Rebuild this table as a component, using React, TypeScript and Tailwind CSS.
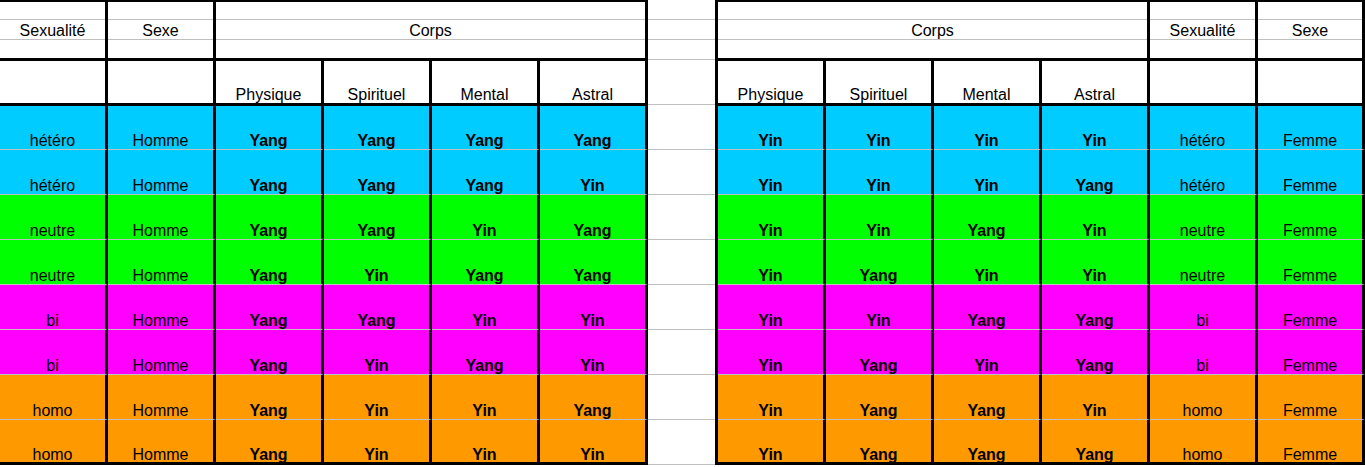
const rows = [
  { bg: 'bg-[#00ccff]', sex: 'hétéro', left: ['Yang', 'Yang', 'Yang', 'Yang'], right: ['Yin', 'Yin', 'Yin', 'Yin'] },
  { bg: 'bg-[#00ccff]', sex: 'hétéro', left: ['Yang', 'Yang', 'Yang', 'Yin'], right: ['Yin', 'Yin', 'Yin', 'Yang'] },
  { bg: 'bg-[#00ff00]', sex: 'neutre', left: ['Yang', 'Yang', 'Yin', 'Yang'], right: ['Yin', 'Yin', 'Yang', 'Yin'] },
  { bg: 'bg-[#00ff00]', sex: 'neutre', left: ['Yang', 'Yin', 'Yang', 'Yang'], right: ['Yin', 'Yang', 'Yin', 'Yin'] },
  { bg: 'bg-[#ff00ff]', sex: 'bi', left: ['Yang', 'Yang', 'Yin', 'Yin'], right: ['Yin', 'Yin', 'Yang', 'Yang'] },
  { bg: 'bg-[#ff00ff]', sex: 'bi', left: ['Yang', 'Yin', 'Yang', 'Yin'], right: ['Yin', 'Yang', 'Yin', 'Yang'] },
  { bg: 'bg-[#ff9900]', sex: 'homo', left: ['Yang', 'Yin', 'Yin', 'Yang'], right: ['Yin', 'Yang', 'Yang', 'Yin'] },
  { bg: 'bg-[#ff9900]', sex: 'homo', left: ['Yang', 'Yin', 'Yin', 'Yin'], right: ['Yin', 'Yang', 'Yang', 'Yang'] },
];

const corps = ['Physique', 'Spirituel', 'Mental', 'Astral'];
const last = rows.length - 1;

// row heights incl. the 1px gridline (last row has the thick bottom bar instead)
const rowH = (i: number) =>
  i === 0 ? 'h-[44px] border-b' : i === last ? 'h-[42px]' : 'h-[45px] border-b';

function Cell({ text, bold, w = 'w-[108px]', h, bg, sink }: { text: string; bold?: boolean; w?: string; h: string; bg: string; sink?: boolean }) {
  return (
    <div className={`${w} ${h} ${bg} border-[#c0c0c0] border-r-[3px] border-r-black flex items-end justify-center ${bold ? 'font-bold' : ''}`}>
      <span className={sink ? '-mb-[1px]' : ''}>{text}</span>
    </div>
  );
}

function HeadCol({ label, w = 'w-[108px]' }: { label: string; w?: string }) {
  return (
    <div className={`${w} border-r-[3px] border-black flex flex-col`}>
      <div className="h-[18px] border-b border-[#c0c0c0]" />
      <div className="h-[20px] border-b border-[#c0c0c0] flex items-end justify-center">{label}</div>
      <div className="h-[18px]" />
    </div>
  );
}

function LeftBlock() {
  return (
    <div className="w-[648px] shrink-0 flex flex-col">
      <div className="h-[2px] bg-black" />
      <div className="flex">
        <HeadCol label="Sexualité" />
        <HeadCol label="Sexe" />
        <HeadCol label="Corps" w="w-[432px]" />
      </div>
      <div className="h-[3px] bg-black" />
      <div className="flex">
        <Cell text="" h="h-[42px]" bg="bg-white" />
        <Cell text="" h="h-[42px]" bg="bg-white" />
        {corps.map(c => (
          <Cell key={c} text={c} h="h-[42px]" bg="bg-white" />
        ))}
      </div>
      <div className="relative h-[3px] bg-black" />
      {rows.map((r, i) => (
        <div key={i} className="flex">
          <Cell text={r.sex} h={rowH(i)} bg={r.bg} sink={i === last} />
          <Cell text="Homme" h={rowH(i)} bg={r.bg} sink={i === last} />
          {r.left.map((v, j) => (
            <Cell key={j} text={v} bold h={rowH(i)} bg={r.bg} sink={i === last} />
          ))}
        </div>
      ))}
      <div className="relative h-[3px] bg-black" />
    </div>
  );
}

function Gap() {
  const hs = ['h-[20px]', 'h-[20px]', 'h-[20px]', 'h-[45px]', ...Array(8).fill('h-[45px]')];
  return (
    <div className="w-[67px] shrink-0 flex flex-col">
      {hs.map((h, i) => (
        <div key={i} className={`${h} border-b border-[#c0c0c0]`} />
      ))}
    </div>
  );
}

function RightBlock() {
  return (
    <div className="w-[650px] shrink-0 flex flex-col border-l-[3px] border-black">
      <div className="h-[2px] bg-black" />
      <div className="flex">
        <HeadCol label="Corps" w="w-[432px]" />
        <HeadCol label="Sexualité" />
        <HeadCol label="Sexe" w="w-[107px]" />
      </div>
      <div className="h-[3px] bg-black" />
      <div className="flex">
        {corps.map(c => (
          <Cell key={c} text={c} h="h-[42px]" bg="bg-white" />
        ))}
        <Cell text="" h="h-[42px]" bg="bg-white" />
        <Cell text="" w="w-[107px]" h="h-[42px]" bg="bg-white" />
      </div>
      <div className="relative h-[3px] bg-black" />
      {rows.map((r, i) => (
        <div key={i} className="flex">
          {r.right.map((v, j) => (
            <Cell key={j} text={v} bold h={rowH(i)} bg={r.bg} sink={i === last} />
          ))}
          <Cell text={r.sex} h={rowH(i)} bg={r.bg} sink={i === last} />
          <Cell text="Femme" w="w-[107px]" h={rowH(i)} bg={r.bg} sink={i === last} />
        </div>
      ))}
      <div className="relative h-[3px] bg-black" />
    </div>
  );
}

export default function App() {
  return (
    <div className="w-[1365px] h-[467px] overflow-hidden bg-white text-black font-['Liberation_Sans',Arial,sans-serif] text-[16px] leading-[16px]">
      <div className="flex items-start">
        <LeftBlock />
        <Gap />
        <RightBlock />
      </div>
    </div>
  );
}
